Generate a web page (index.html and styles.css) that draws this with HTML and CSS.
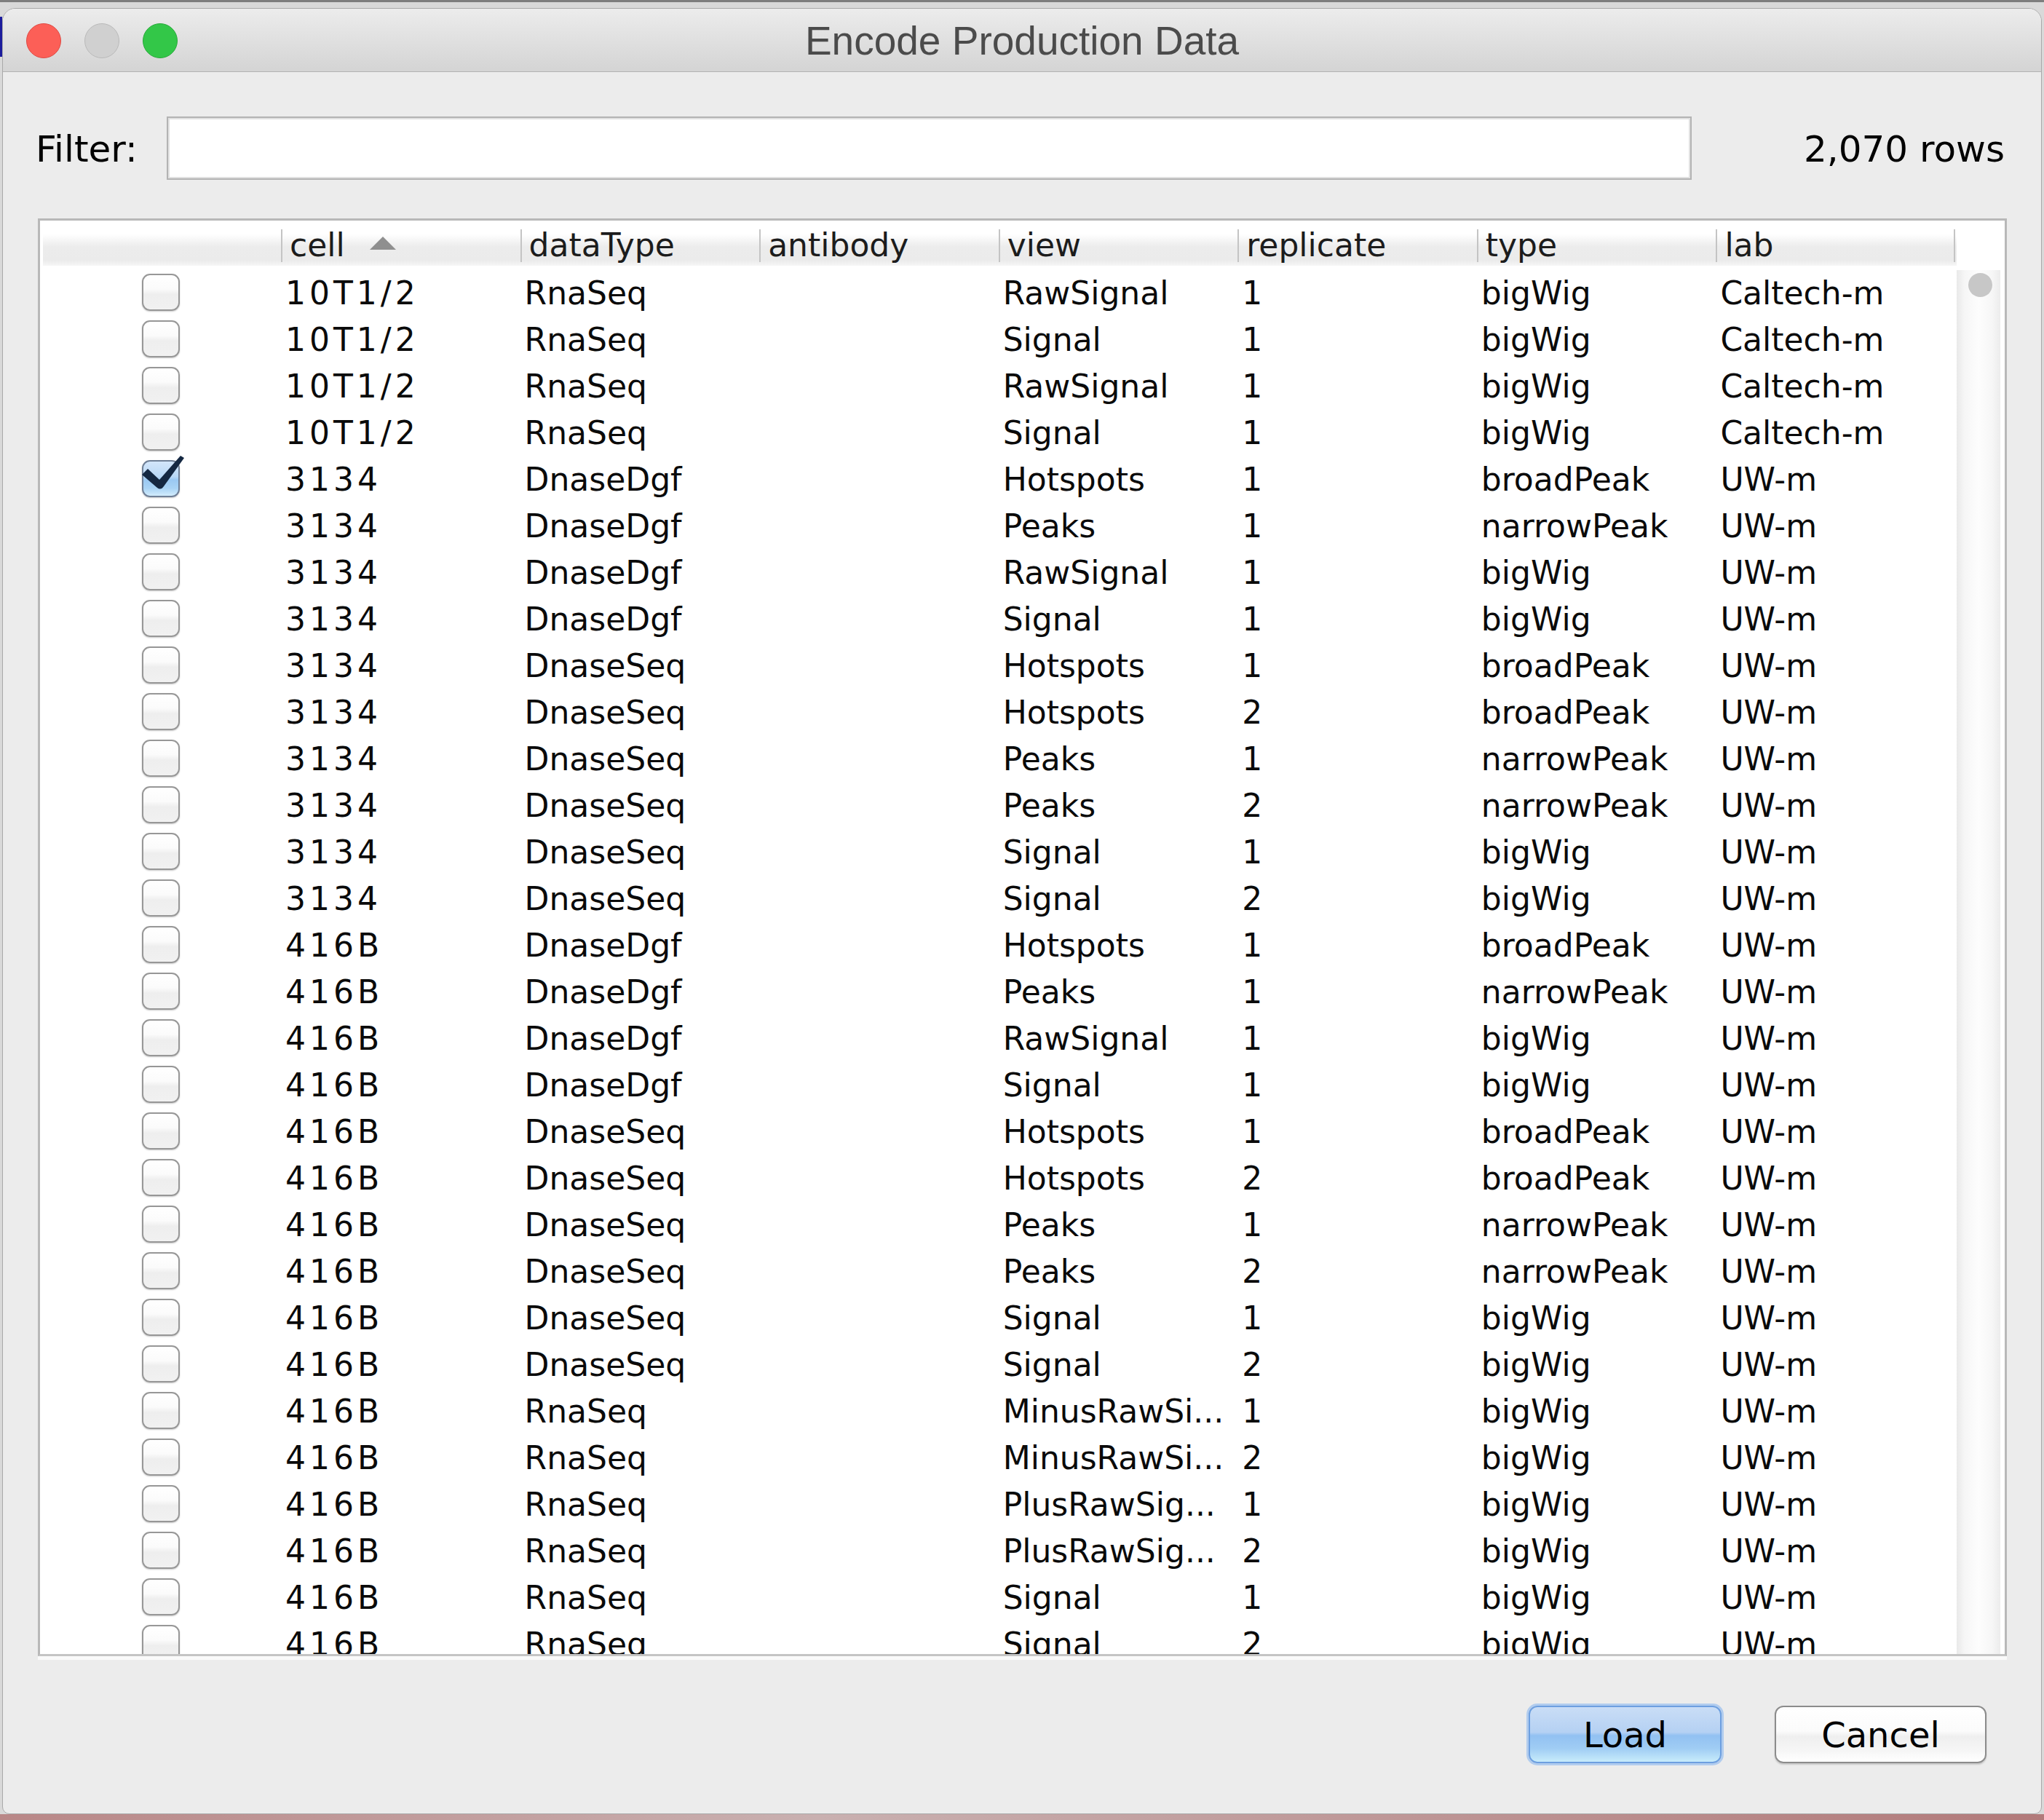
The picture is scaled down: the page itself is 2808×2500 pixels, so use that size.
FILE: index.html
```html
<!DOCTYPE html>
<html lang="en">
<head>
<meta charset="utf-8">
<title>Encode Production Data</title>
<link rel="stylesheet" href="styles.css">
</head>
<body>
<div class="window">
  <div class="titlebar">
    <div class="lights">
      <span class="light red"></span>
      <span class="light gray"></span>
      <span class="light green"></span>
    </div>
    <div class="title">Encode Production Data</div>
    <div class="spacer"></div>
  </div>

  <div class="filter-row">
    <div class="filter-label">Filter:</div>
    <div class="filter-field"></div>
    <div class="row-count">2,070 rows</div>
  </div>

  <div class="panel">
    <div class="thead-wrap">
      <div class="thead">
        <div class="hc first"></div>
        <div class="hc">cell<span class="sort"></span></div>
        <div class="hc">dataType</div>
        <div class="hc">antibody</div>
        <div class="hc">view</div>
        <div class="hc">replicate</div>
        <div class="hc">type</div>
        <div class="hc last">lab</div>
      </div>
    </div>
    <div class="tbody-wrap">
      <div class="tbody">
        <div class="row"><div class="cb-cell"><span class="cb"></span></div><div class="c id">10T1/2</div><div class="c">RnaSeq</div><div class="c"></div><div class="c">RawSignal</div><div class="c">1</div><div class="c">bigWig</div><div class="c">Caltech-m</div></div>
        <div class="row"><div class="cb-cell"><span class="cb"></span></div><div class="c id">10T1/2</div><div class="c">RnaSeq</div><div class="c"></div><div class="c">Signal</div><div class="c">1</div><div class="c">bigWig</div><div class="c">Caltech-m</div></div>
        <div class="row"><div class="cb-cell"><span class="cb"></span></div><div class="c id">10T1/2</div><div class="c">RnaSeq</div><div class="c"></div><div class="c">RawSignal</div><div class="c">1</div><div class="c">bigWig</div><div class="c">Caltech-m</div></div>
        <div class="row"><div class="cb-cell"><span class="cb"></span></div><div class="c id">10T1/2</div><div class="c">RnaSeq</div><div class="c"></div><div class="c">Signal</div><div class="c">1</div><div class="c">bigWig</div><div class="c">Caltech-m</div></div>
        <div class="row"><div class="cb-cell"><span class="cb checked"><svg class="tick" width="52" height="51" viewBox="0 0 52 51"><path d="M0 20 L8 12 L24 27 L53 -6 L58 -3 L30 36 Q26 42 21 38 Z"/></svg></span></div><div class="c id">3134</div><div class="c">DnaseDgf</div><div class="c"></div><div class="c">Hotspots</div><div class="c">1</div><div class="c">broadPeak</div><div class="c">UW-m</div></div>
        <div class="row"><div class="cb-cell"><span class="cb"></span></div><div class="c id">3134</div><div class="c">DnaseDgf</div><div class="c"></div><div class="c">Peaks</div><div class="c">1</div><div class="c">narrowPeak</div><div class="c">UW-m</div></div>
        <div class="row"><div class="cb-cell"><span class="cb"></span></div><div class="c id">3134</div><div class="c">DnaseDgf</div><div class="c"></div><div class="c">RawSignal</div><div class="c">1</div><div class="c">bigWig</div><div class="c">UW-m</div></div>
        <div class="row"><div class="cb-cell"><span class="cb"></span></div><div class="c id">3134</div><div class="c">DnaseDgf</div><div class="c"></div><div class="c">Signal</div><div class="c">1</div><div class="c">bigWig</div><div class="c">UW-m</div></div>
        <div class="row"><div class="cb-cell"><span class="cb"></span></div><div class="c id">3134</div><div class="c">DnaseSeq</div><div class="c"></div><div class="c">Hotspots</div><div class="c">1</div><div class="c">broadPeak</div><div class="c">UW-m</div></div>
        <div class="row"><div class="cb-cell"><span class="cb"></span></div><div class="c id">3134</div><div class="c">DnaseSeq</div><div class="c"></div><div class="c">Hotspots</div><div class="c">2</div><div class="c">broadPeak</div><div class="c">UW-m</div></div>
        <div class="row"><div class="cb-cell"><span class="cb"></span></div><div class="c id">3134</div><div class="c">DnaseSeq</div><div class="c"></div><div class="c">Peaks</div><div class="c">1</div><div class="c">narrowPeak</div><div class="c">UW-m</div></div>
        <div class="row"><div class="cb-cell"><span class="cb"></span></div><div class="c id">3134</div><div class="c">DnaseSeq</div><div class="c"></div><div class="c">Peaks</div><div class="c">2</div><div class="c">narrowPeak</div><div class="c">UW-m</div></div>
        <div class="row"><div class="cb-cell"><span class="cb"></span></div><div class="c id">3134</div><div class="c">DnaseSeq</div><div class="c"></div><div class="c">Signal</div><div class="c">1</div><div class="c">bigWig</div><div class="c">UW-m</div></div>
        <div class="row"><div class="cb-cell"><span class="cb"></span></div><div class="c id">3134</div><div class="c">DnaseSeq</div><div class="c"></div><div class="c">Signal</div><div class="c">2</div><div class="c">bigWig</div><div class="c">UW-m</div></div>
        <div class="row"><div class="cb-cell"><span class="cb"></span></div><div class="c id">416B</div><div class="c">DnaseDgf</div><div class="c"></div><div class="c">Hotspots</div><div class="c">1</div><div class="c">broadPeak</div><div class="c">UW-m</div></div>
        <div class="row"><div class="cb-cell"><span class="cb"></span></div><div class="c id">416B</div><div class="c">DnaseDgf</div><div class="c"></div><div class="c">Peaks</div><div class="c">1</div><div class="c">narrowPeak</div><div class="c">UW-m</div></div>
        <div class="row"><div class="cb-cell"><span class="cb"></span></div><div class="c id">416B</div><div class="c">DnaseDgf</div><div class="c"></div><div class="c">RawSignal</div><div class="c">1</div><div class="c">bigWig</div><div class="c">UW-m</div></div>
        <div class="row"><div class="cb-cell"><span class="cb"></span></div><div class="c id">416B</div><div class="c">DnaseDgf</div><div class="c"></div><div class="c">Signal</div><div class="c">1</div><div class="c">bigWig</div><div class="c">UW-m</div></div>
        <div class="row"><div class="cb-cell"><span class="cb"></span></div><div class="c id">416B</div><div class="c">DnaseSeq</div><div class="c"></div><div class="c">Hotspots</div><div class="c">1</div><div class="c">broadPeak</div><div class="c">UW-m</div></div>
        <div class="row"><div class="cb-cell"><span class="cb"></span></div><div class="c id">416B</div><div class="c">DnaseSeq</div><div class="c"></div><div class="c">Hotspots</div><div class="c">2</div><div class="c">broadPeak</div><div class="c">UW-m</div></div>
        <div class="row"><div class="cb-cell"><span class="cb"></span></div><div class="c id">416B</div><div class="c">DnaseSeq</div><div class="c"></div><div class="c">Peaks</div><div class="c">1</div><div class="c">narrowPeak</div><div class="c">UW-m</div></div>
        <div class="row"><div class="cb-cell"><span class="cb"></span></div><div class="c id">416B</div><div class="c">DnaseSeq</div><div class="c"></div><div class="c">Peaks</div><div class="c">2</div><div class="c">narrowPeak</div><div class="c">UW-m</div></div>
        <div class="row"><div class="cb-cell"><span class="cb"></span></div><div class="c id">416B</div><div class="c">DnaseSeq</div><div class="c"></div><div class="c">Signal</div><div class="c">1</div><div class="c">bigWig</div><div class="c">UW-m</div></div>
        <div class="row"><div class="cb-cell"><span class="cb"></span></div><div class="c id">416B</div><div class="c">DnaseSeq</div><div class="c"></div><div class="c">Signal</div><div class="c">2</div><div class="c">bigWig</div><div class="c">UW-m</div></div>
        <div class="row"><div class="cb-cell"><span class="cb"></span></div><div class="c id">416B</div><div class="c">RnaSeq</div><div class="c"></div><div class="c">MinusRawSi...</div><div class="c">1</div><div class="c">bigWig</div><div class="c">UW-m</div></div>
        <div class="row"><div class="cb-cell"><span class="cb"></span></div><div class="c id">416B</div><div class="c">RnaSeq</div><div class="c"></div><div class="c">MinusRawSi...</div><div class="c">2</div><div class="c">bigWig</div><div class="c">UW-m</div></div>
        <div class="row"><div class="cb-cell"><span class="cb"></span></div><div class="c id">416B</div><div class="c">RnaSeq</div><div class="c"></div><div class="c">PlusRawSig...</div><div class="c">1</div><div class="c">bigWig</div><div class="c">UW-m</div></div>
        <div class="row"><div class="cb-cell"><span class="cb"></span></div><div class="c id">416B</div><div class="c">RnaSeq</div><div class="c"></div><div class="c">PlusRawSig...</div><div class="c">2</div><div class="c">bigWig</div><div class="c">UW-m</div></div>
        <div class="row"><div class="cb-cell"><span class="cb"></span></div><div class="c id">416B</div><div class="c">RnaSeq</div><div class="c"></div><div class="c">Signal</div><div class="c">1</div><div class="c">bigWig</div><div class="c">UW-m</div></div>
        <div class="row"><div class="cb-cell"><span class="cb"></span></div><div class="c id">416B</div><div class="c">RnaSeq</div><div class="c"></div><div class="c">Signal</div><div class="c">2</div><div class="c">bigWig</div><div class="c">UW-m</div></div>
      </div>
      <div class="scrollbar"><span class="thumb"></span></div>
    </div>
  </div>

  <div class="buttons">
    <button class="btn load" type="button">Load</button>
    <button class="btn cancel" type="button">Cancel</button>
  </div>
</div>
</body>
</html>
```

FILE: styles.css
```css
* { box-sizing: border-box; }

html, body { margin: 0; }

body {
  width: 2808px;
  height: 2500px;
  overflow: hidden;
  padding: 11px 0 0 3px;
  background:
    linear-gradient(#7e7e7e, #7e7e7e) 0 0 / 100% 3px no-repeat,
    linear-gradient(#1c1c9c, #1c1c9c) 0 23px / 3px 55px no-repeat,
    linear-gradient(90deg, #b98787, #c9b0b0 40%, #b27a7a) 0 100% / 100% 8px no-repeat,
    #d9d9d9;
  font-family: "DejaVu Sans", "Noto Sans", sans-serif;
  color: #000;
}

.window {
  width: 2802px;
  height: 2481px;
  border: 1px solid #a9a9a9;
  border-radius: 18px 18px 10px 10px;
  background: #ececec;
  overflow: hidden;
  display: flex;
  flex-direction: column;
}

/* ---------- title bar ---------- */
.titlebar {
  flex: none;
  height: 87px;
  display: grid;
  grid-template-columns: 1fr auto 1fr;
  border-bottom: 1px solid #b2b2b2;
  background: linear-gradient(#ececec, #d4d4d4);
}

.lights {
  display: flex;
  align-items: flex-start;
  gap: 32px;
  padding: 20px 0 0 32px;
}

.light {
  width: 48px;
  height: 48px;
  border-radius: 50%;
}

.red { background: #fc5f57; border: 1px solid #df4a43; }
.gray { background: #d0d0d0; border: 1px solid #bababa; }
.green { background: #33c748; border: 1px solid #28aa3a; }

.title {
  font-family: "Liberation Sans", Arial, sans-serif;
  font-size: 55px;
  color: #4b4b4b;
  padding-top: 3px;
  line-height: 83px;
  white-space: nowrap;
}

/* ---------- filter row ---------- */
.filter-row {
  flex: none;
  display: flex;
  align-items: flex-start;
  height: 87px;
  margin-top: 61px;
  padding: 0 50px 0 45px;
  font-size: 50px;
}

.filter-label,
.row-count {
  padding-top: 4px;
  line-height: 83px;
  white-space: nowrap;
}

.filter-field {
  width: 2095px;
  height: 87px;
  margin-left: 40px;
  background: #fff;
  border: 2px solid #b3b3b3;
  box-shadow: inset 0 0 0 2px #e1e1e1;
}

.row-count { margin-left: auto; }

/* ---------- table panel ---------- */
.panel {
  flex: none;
  height: 1975px;
  margin: 53px 47px 0 48px;
  border: 3px solid #b8b8b8;
  border-bottom-color: #c4c4c4;
  background: #fff;
  box-shadow: 0 5px 0 #fafafa;
  display: flex;
  flex-direction: column;
}

.thead-wrap {
  flex: none;
  height: 62px;
  padding-left: 4px;
  display: flex;
}

.thead {
  width: 2629px;
  height: 62px;
  display: grid;
  grid-template-columns: 327px repeat(7, 328.57px);
  background: linear-gradient(#ffffff 0%, #ffffff 30%, #ececec 58%, #ebebeb 88%, #f6f6f6 100%);
}

.hc {
  padding: 6px 0 0 12px;
  line-height: 56px;
  font-size: 44px;
  color: #1c1c1c;
  white-space: nowrap;
  background: linear-gradient(#c4c4c4, #c4c4c4) 0 12px / 2px 45px no-repeat;
}

.hc.first { background: none; }

.hc.last {
  background:
    linear-gradient(#c4c4c4, #c4c4c4) 0 12px / 2px 45px no-repeat,
    linear-gradient(#c4c4c4, #c4c4c4) 100% 12px / 2px 45px no-repeat;
}

.sort {
  display: inline-block;
  width: 0;
  height: 0;
  margin-left: 34px;
  margin-bottom: 9px;
  border-left: 18px solid transparent;
  border-right: 18px solid transparent;
  border-bottom: 18px solid #8f8f8f;
}

.tbody-wrap {
  flex: 1;
  min-height: 0;
  display: flex;
  overflow: hidden;
}

.tbody {
  flex: none;
  width: 2633px;
  overflow: hidden;
}

.row {
  display: grid;
  grid-template-columns: 331px repeat(7, 328.57px);
  height: 64px;
}

.cb-cell {
  display: flex;
  justify-content: center;
  padding-top: 11px;
}

.cb {
  position: relative;
  display: block;
  width: 52px;
  height: 51px;
  border-radius: 11px;
  border: 2px solid #979797;
  background: linear-gradient(#ffffff 0%, #fbfbfb 40%, #eeeeee 56%, #f1f1f1 100%);
  box-shadow: 0 1px 2px rgba(0, 0, 0, 0.22);
}

.cb.checked {
  border-color: #6f7f96;
  background: linear-gradient(#d3e6fa 0%, #b9d8f6 44%, #9ac8f2 54%, #a9d3f5 78%, #d2ecfc 100%);
}

.tick {
  position: absolute;
  left: -2px;
  top: -2px;
  overflow: visible;
  fill: #142741;
}

.c {
  padding: 12px 0 0 6px;
  line-height: 52px;
  font-size: 44px;
  white-space: nowrap;
  color: #0a0a0a;
}

.c.id { letter-spacing: 5px; }

.scrollbar {
  flex: none;
  width: 60px;
  margin-top: 6px;
  padding: 4px 0 0 16px;
  background: linear-gradient(90deg, #e9e9e9 0%, #f6f6f6 18%, #fdfdfd 50%, #f6f6f6 82%, #ececec 100%);
}

.thumb {
  display: block;
  width: 33px;
  height: 33px;
  border-radius: 50%;
  background: #c7c7c7;
}

/* ---------- buttons ---------- */
.buttons {
  flex: none;
  display: flex;
  justify-content: flex-end;
  gap: 73px;
  margin-top: 68px;
  padding-right: 75px;
}

.btn {
  margin: 0;
  height: 79px;
  padding: 2px 0 0;
  border-radius: 12px;
  font-family: "DejaVu Sans", "Noto Sans", sans-serif;
  font-size: 48px;
  line-height: 73px;
  color: #000;
  text-align: center;
}

.load {
  width: 265px;
  border: 2px solid #6d9fe0;
  background: linear-gradient(#c9ddf6 0%, #b5d1f3 46%, #92c1f2 52%, #a0cdf4 76%, #c8ecfb 100%);
  box-shadow: 0 0 0 3px rgba(130, 178, 240, 0.55);
}

.cancel {
  width: 291px;
  border: 2px solid #8c8c8c;
  background: linear-gradient(#ffffff 0%, #fbfbfb 44%, #efefef 54%, #f6f6f6 80%, #ffffff 100%);
  box-shadow: 0 2px 2px rgba(0, 0, 0, 0.16);
}
```
